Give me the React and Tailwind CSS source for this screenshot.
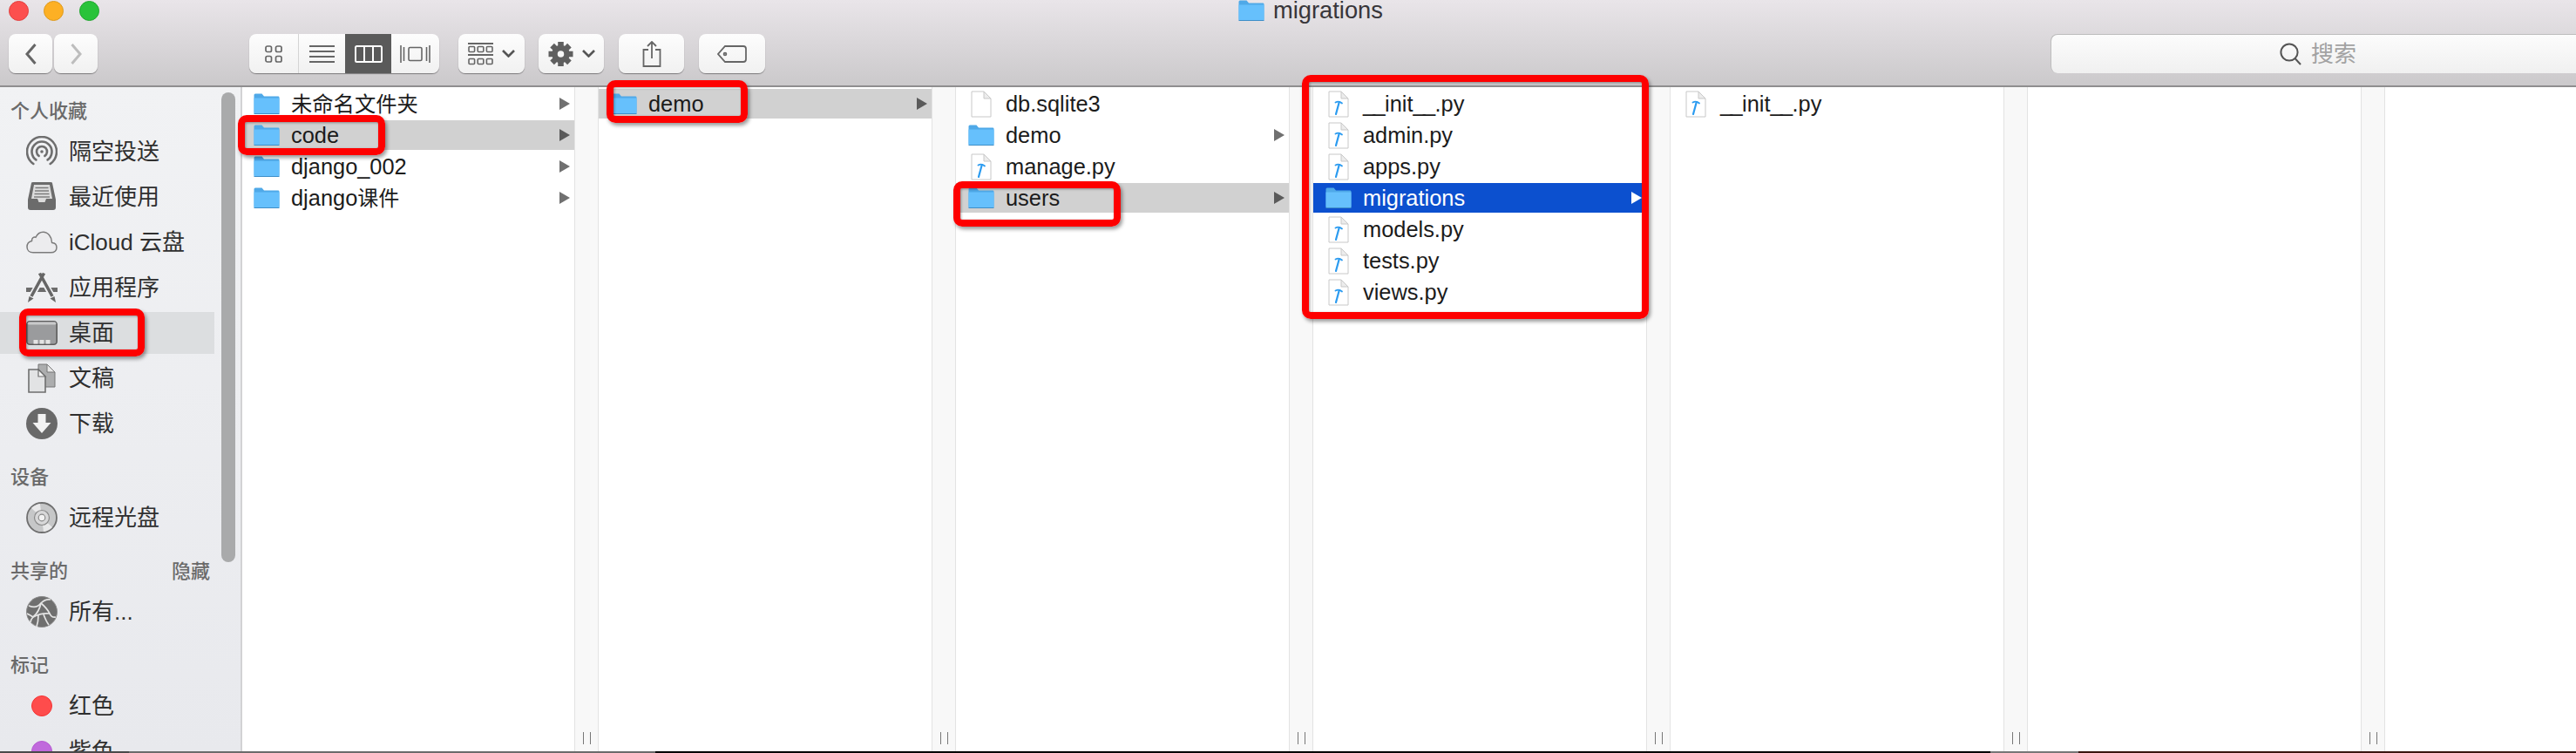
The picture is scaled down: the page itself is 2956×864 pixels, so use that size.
import React from "react";

const FONT = "font-['Liberation_Sans','Noto_Sans_CJK_SC',sans-serif]";

function Folder({ className = "w-[30px] h-[24px]" }) {
  return (
    <svg viewBox="0 0 30 24" className={className}>
      <path d="M0.5 2 Q0.5 0.5 2 0.5 H9.5 L12 3.5 H28.5 Q29.5 3.5 29.5 5 V22.5 Q29.5 23.5 28.5 23.5 H1.5 Q0.5 23.5 0.5 22.5 Z" fill="#4fa9e8" />
      <path d="M0.5 5.5 H29.5 V22 Q29.5 23 28.5 23 H1.5 Q0.5 23 0.5 22 Z" fill="#66c0fc" />
      <rect x="0.5" y="23" width="29" height="1" fill="#3f8fc8" />
    </svg>
  );
}

function PyFile({ plain }) {
  return (
    <svg viewBox="0 0 24 31" className="w-[24px] h-[31px]">
      <path d="M1 1 H15 L23 9 V30 H1 Z" fill="#fff" stroke="#c8c8c8" strokeWidth="1" />
      <path d="M15 1 V9 H23 Z" fill="#ececec" stroke="#c8c8c8" strokeWidth="1" />
      {!plain && (
        <g stroke="#2b9bf0" strokeLinecap="round" fill="none">
          <path d="M12.8 13 L9 27" strokeWidth="2.2" />
          <path d="M8.5 13.5 Q12.5 11.5 16 14.5" strokeWidth="1.8" />
        </g>
      )}
    </svg>
  );
}

function Row({ icon, children, arrow, selected, active, plain, first }) {
  let bg = "";
  if (selected) bg = "bg-[#d1d1d1]";
  if (active) bg = "bg-[#0c50cf]";
  return (
    <div className={`h-[34px] flex items-center ${first ? "pl-[13px]" : "pl-[14px]"} ${bg}`}>
      <div className="w-[30px] flex justify-center shrink-0">
        {icon === "folder" ? <Folder /> : <PyFile plain={plain} />}
      </div>
      <span className={`ml-[13px] text-[25.4px] leading-[34px] whitespace-nowrap ${active ? "text-white" : "text-[#1b1b1b]"}`}>{children}</span>
      {arrow && (
        <svg viewBox="0 0 12 14" className="ml-auto mr-[5px] w-[12px] h-[14px] shrink-0">
          <path d="M0 0 L12 7 L0 14 Z" fill={active ? "#fff" : selected ? "#5a5a5a" : "#707070"} />
        </svg>
      )}
    </div>
  );
}

// underscores run narrower in the reference font
function InitName() {
  return (
    <>
      <span className="tracking-[-2.6px]">__</span>
      <span className="ml-[2px]">init</span>
      <span className="tracking-[-2.6px]">__</span>
      <span className="ml-[2px]">.py</span>
    </>
  );
}

function Resizer() {
  return (
    <div className="w-[28px] shrink-0 bg-[#f8f8f8] border-x border-[#e3e3e3] flex justify-center items-end gap-[7px] pb-[8px]">
      <div className="w-[1px] h-[14px] bg-[#777]" />
      <div className="w-[1px] h-[14px] bg-[#777]" />
    </div>
  );
}

function Column({ width = "w-[382px]", children }) {
  return (
    <>
      <div className={`${width} shrink-0 bg-white pt-[2px] flex flex-col gap-[2px]`}>{children}</div>
      <Resizer />
    </>
  );
}

function SideHead({ children, right, top }) {
  return (
    <div className={`h-[40px] flex items-center justify-between pl-[12px] pr-[5px] pb-[2px] text-[22px] font-medium text-[#6a6a6a] ${top ? "" : "mt-[16px]"}`}>
      <span>{children}</span>
      {right && <span>{right}</span>}
    </div>
  );
}

function SideItem({ icon, children, selected }) {
  return (
    <div className="py-[2px]">
      <div className={`h-[48px] flex items-center pl-[30px] gap-[13px] text-[26px] text-[#2f2f2f] whitespace-nowrap ${selected ? "bg-[#dcdee0]" : ""}`}>
        <div className="w-[36px] h-[36px] flex items-center justify-center shrink-0">{icon}</div>
        <span>{children}</span>
      </div>
    </div>
  );
}

const AirdropIcon = (
  <svg viewBox="0 0 36 36" className="w-[36px] h-[36px]" fill="none" stroke="#6e6e6e" strokeWidth="2.6" strokeLinecap="round">
    <path d="M8.3 32 A17 17 0 1 1 27.7 32" />
    <path d="M11.4 27.4 A11.5 11.5 0 1 1 24.6 27.4" />
    <path d="M14.6 22.9 A6 6 0 1 1 21.4 22.9" />
    <circle cx="18" cy="18" r="1.8" fill="#6e6e6e" stroke="none" />
  </svg>
);

const RecentIcon = (
  <svg viewBox="0 0 36 36" className="w-[36px] h-[36px]">
    <path d="M6 2 Q6 1 8 1 H28 Q30 1 30 2 L34 21 V30 Q34 33 31 33 H5 Q2 33 2 30 V21 Z" fill="#6b6b6b" />
    <path d="M9 4 H27 L30 20 H23 L21.5 24 H14.5 L13 20 H6 Z" fill="#dcdcdc" />
    <g stroke="#777" strokeWidth="1.4">
      <path d="M10.5 7.5 H25.5" />
      <path d="M10 11 H26" />
      <path d="M9.5 14.5 H26.5" />
      <path d="M9 18 H27" />
    </g>
  </svg>
);

const CloudIcon = (
  <svg viewBox="0 0 36 26" className="w-[36px] h-[26px]">
    <path d="M8 24.8 H28.5 C32.5 24.8 35 22.3 35 19 C35 15.8 32.7 13.6 29.6 13.4 C29.4 6.6 25 1.2 19.5 1.2 C15.6 1.2 12.7 3.6 11 7.2 C8.8 6.4 6.2 8.2 6.5 11.4 C3 12.2 1 15 1 18.2 C1 22 3.8 24.8 8 24.8 Z" fill="#ececee" stroke="#7b7b7b" strokeWidth="1.5" />
  </svg>
);

const AppsIcon = (
  <svg viewBox="0 0 36 36" className="w-[36px] h-[36px]">
    <path d="M0 18 H36 V23 H0 Z" fill="#6c6c6c" />
    <path d="M21 1 L5 30" stroke="#f0f1f3" strokeWidth="7" />
    <path d="M15 1 L31 30" stroke="#f0f1f3" strokeWidth="7" />
    <path d="M20.5 1.5 L6 28" stroke="#666" strokeWidth="3.6" />
    <path d="M15.5 1.5 L30 28" stroke="#666" strokeWidth="3.6" />
    <path d="M3.5 28 L8.5 30.5 L2 35 Z" fill="#666" />
    <path d="M32.5 28 L27.5 30.5 L34 35 Z" fill="#666" />
  </svg>
);

const DesktopIcon = (
  <svg viewBox="0 0 36 28" className="w-[36px] h-[28px]">
    <rect x="0.8" y="0.8" width="34.4" height="26.4" rx="3.5" fill="#9a9b9d" stroke="#5d5d5d" strokeWidth="1.6" />
    <rect x="1.6" y="1.6" width="32.8" height="3" rx="1.5" fill="#c9cacb" />
    <rect x="8.5" y="22" width="5" height="4.5" fill="#e4e4e4" />
    <rect x="15.5" y="22" width="5" height="4.5" fill="#e4e4e4" />
    <rect x="22.5" y="22" width="5" height="4.5" fill="#e4e4e4" />
  </svg>
);

const DocsIcon = (
  <svg viewBox="0 0 32 34" className="w-[32px] h-[34px]">
    <path d="M12 1 H22 L31 10 V27 H12 Z" fill="#acadae" stroke="#777" strokeWidth="1" />
    <path d="M22 1 V10 H31 Z" fill="#e6e6e6" stroke="#777" strokeWidth="1" />
    <path d="M1 7 H12 L20 15 V33 H1 Z" fill="#e2e3e4" stroke="#6e6e6e" strokeWidth="1.6" />
    <path d="M12 7 V15 H20 Z" fill="#f5f5f5" stroke="#6e6e6e" strokeWidth="1.2" />
  </svg>
);

const DownloadIcon = (
  <svg viewBox="0 0 36 36" className="w-[36px] h-[36px]">
    <circle cx="18" cy="18" r="18" fill="#696969" />
    <path d="M13.5 7 H22.5 V17 H28.5 L18 29 L7.5 17 H13.5 Z" fill="#f2f2f2" />
  </svg>
);

const DiscIcon = (
  <svg viewBox="0 0 36 36" className="w-[36px] h-[36px]">
    <circle cx="18" cy="18" r="17" fill="#c6c7c8" stroke="#6f6f6f" strokeWidth="1.8" />
    <path d="M18 18 L6 7 A17 17 0 0 1 16 2 Z" fill="#e9e9ea" />
    <path d="M18 18 L30 29 A17 17 0 0 1 20 34 Z" fill="#e9e9ea" />
    <circle cx="18" cy="18" r="8.5" fill="#d8d8d9" stroke="#8a8a8a" strokeWidth="1.2" />
    <circle cx="18" cy="18" r="3.8" fill="#f2f2f2" stroke="#8a8a8a" strokeWidth="1.2" />
  </svg>
);

const NetworkIcon = (
  <svg viewBox="0 0 36 36" className="w-[36px] h-[36px]">
    <circle cx="18" cy="18" r="17.5" fill="#6f6f6f" stroke="#8a8a8a" strokeWidth="1" />
    <g fill="none" stroke="#e4e4e4" strokeWidth="1.7">
      <path d="M3 11 Q12 15 17 8 Q22 3 28 4" />
      <path d="M17 8 Q15 18 8 24 Q5 27 5 30" />
      <path d="M17 8 Q24 14 27 20 Q29 25 34 24" />
      <path d="M8 24 Q17 19 27 20" />
      <path d="M14 22 Q14 29 12 35" />
      <path d="M20 21 Q23 29 26 33" />
      <path d="M1 20 Q5 22 8 24" />
    </g>
  </svg>
);

function TagDot({ color }) {
  return (
    <div className="w-[36px] flex justify-center">
      <div className={`w-[24px] h-[24px] rounded-full border ${color}`} />
    </div>
  );
}

function Btn({ className = "", children }) {
  return (
    <div className={`h-[45px] flex items-center justify-center rounded-[8px] bg-linear-to-b from-[#fdfdfd] to-[#f1f1f1] shadow-[0_1px_1px_rgba(0,0,0,0.4)] ${className}`}>
      {children}
    </div>
  );
}

function Chevron() {
  return (
    <svg viewBox="0 0 15 9" className="w-[15px] h-[9px]" fill="none" stroke="#555" strokeWidth="2.6">
      <path d="M1 1 L7.5 7.5 L14 1" />
    </svg>
  );
}

function ThreeBoxes({ y }) {
  return (
    <g fill="none" stroke="#666" strokeWidth="1.6">
      <rect x="1" y={y} width="6.6" height="6" rx="1" />
      <rect x="11.2" y={y} width="6.6" height="6" rx="1" />
      <rect x="21.4" y={y} width="6.6" height="6" rx="1" />
    </g>
  );
}

function Gear() {
  const teeth = [0, 45, 90, 135, 180, 225, 270, 315];
  return (
    <svg viewBox="0 0 30 30" className="w-[29px] h-[28px]">
      {teeth.map((a) => (
        <rect key={a} x="11.5" y="0" width="7" height="7" fill="#5f5f5f" transform={`rotate(${a} 15 15)`} />
      ))}
      <circle cx="15" cy="15" r="11" fill="#5f5f5f" />
      <circle cx="15" cy="15" r="4" fill="#f6f6f6" />
    </svg>
  );
}

function Toolbar() {
  return (
    <div className="h-[100px] shrink-0 bg-linear-to-b from-[#e9e5e9] to-[#cbc9cb] border-b-2 border-[#8f8e8f] overflow-hidden">
      <div className="h-[39px] flex">
        <div className="w-[23px] h-[23px] ml-[10px] mt-[1px] rounded-full bg-[#fc4f4e] border border-[#e2403f]" />
        <div className="w-[23px] h-[23px] ml-[17px] mt-[1px] rounded-full bg-[#fdb024] border border-[#dd9a1f]" />
        <div className="w-[23px] h-[23px] ml-[18px] mt-[1px] rounded-full bg-[#29c33a] border border-[#22a630]" />
        <div className="ml-[1307px] flex items-center h-[24px] gap-[10px]">
          <Folder />
          <span className="text-[27.3px] leading-[24px] text-[#38363a]">migrations</span>
        </div>
      </div>

      <div className="flex pl-[10px]">
        <Btn className="w-[50px]">
          <svg viewBox="0 0 13 24" className="w-[13px] h-[24px]" fill="none" stroke="#666" strokeWidth="3">
            <path d="M11.5 1 L2 12 L11.5 23" />
          </svg>
        </Btn>
        <Btn className="w-[50px] ml-[2px]">
          <svg viewBox="0 0 13 24" className="w-[13px] h-[24px]" fill="none" stroke="#bdbdbd" strokeWidth="3">
            <path d="M1.5 1 L11 12 L1.5 23" />
          </svg>
        </Btn>

        <div className="ml-[174px] w-[218px] h-[45px] flex rounded-[8px] overflow-hidden bg-linear-to-b from-[#fdfdfd] to-[#f1f1f1] shadow-[0_1px_1px_rgba(0,0,0,0.4)]">
          <div className="w-[57px] flex items-center justify-center border-r border-[#d4d4d4]">
            <svg viewBox="0 0 20 20" className="w-[20px] h-[20px]" fill="none" stroke="#666" strokeWidth="1.7">
              <rect x="1" y="1" width="6.5" height="6.5" rx="1.8" />
              <rect x="12.5" y="1" width="6.5" height="6.5" rx="1.8" />
              <rect x="1" y="12.5" width="6.5" height="6.5" rx="1.8" />
              <rect x="12.5" y="12.5" width="6.5" height="6.5" rx="1.8" />
            </svg>
          </div>
          <div className="w-[53px] flex items-center justify-center">
            <svg viewBox="0 0 29 20" className="w-[29px] h-[20px]" stroke="#666" strokeWidth="2">
              <path d="M0 1 H29 M0 7 H29 M0 13 H29 M0 19 H29" />
            </svg>
          </div>
          <div className="w-[53px] flex items-center justify-center bg-[#5a5a5a]">
            <svg viewBox="0 0 32 20" className="w-[32px] h-[20px]" fill="none" stroke="#fff" strokeWidth="2">
              <rect x="1" y="1" width="30" height="18" rx="1.5" />
              <path d="M11 1 V19 M21 1 V19" />
            </svg>
          </div>
          <div className="w-[55px] flex items-center justify-center">
            <svg viewBox="0 0 35 22" className="w-[35px] h-[22px]" fill="none" stroke="#666" strokeWidth="1.6">
              <rect x="10" y="3.5" width="15" height="15" rx="1.5" />
              <path d="M1 1 V21 M4.5 3 V19 M34 1 V21 M30.5 3 V19" />
            </svg>
          </div>
        </div>

        <Btn className="w-[76px] ml-[22px] gap-[10px]">
          <svg viewBox="0 0 29 26" className="w-[29px] h-[26px]">
            <path d="M0 1 H29 M0 14 H29" stroke="#666" strokeWidth="1.8" />
            <ThreeBoxes y={4.5} />
            <ThreeBoxes y={18.5} />
          </svg>
          <Chevron />
        </Btn>
        <Btn className="w-[75px] ml-[16px] gap-[10px]">
          <Gear />
          <Chevron />
        </Btn>
        <Btn className="w-[75px] ml-[17px]">
          <svg viewBox="0 0 22 30" className="w-[22px] h-[30px]" fill="none" stroke="#666" strokeWidth="1.8">
            <path d="M7 10 H1.5 V29 H20.5 V10 H15" />
            <path d="M11 20 V1.5 M6 6 L11 1 L16 6" />
          </svg>
        </Btn>
        <Btn className="w-[76px] ml-[17px]">
          <svg viewBox="0 0 34 20" className="w-[34px] h-[20px]" fill="none" stroke="#666" strokeWidth="1.8">
            <path d="M9 1 H30 Q33 1 33 4 V16 Q33 19 30 19 H9 L1 10 Z" />
            <circle cx="9" cy="10" r="1.4" />
          </svg>
        </Btn>

        <div className="ml-[1475px] flex-1 h-[45px] flex items-center pl-[262px] gap-[11px] rounded-l-[8px] bg-linear-to-b from-[#fcfcfc] to-[#f0f0f0] border-t border-l border-[#bdbdbd] border-b-[#9a9a9a]">
          <svg viewBox="0 0 25 26" className="w-[25px] h-[26px]" fill="none" stroke="#555" strokeWidth="2">
            <circle cx="11" cy="11" r="9.6" />
            <path d="M17.5 18 L24 25" />
          </svg>
          <span className="text-[26px] text-[#a2a2a2]">搜索</span>
        </div>
      </div>
    </div>
  );
}

function Sidebar() {
  return (
    <div className="w-[278px] shrink-0 flex bg-linear-to-b from-[#f1f2f4] to-[#e8e9ed] border-r-2 border-[#d2d2d4] overflow-hidden">
      <div className="w-[246px] shrink-0 pt-[8px]">
        <SideHead top>个人收藏</SideHead>
        <SideItem icon={AirdropIcon}>隔空投送</SideItem>
        <SideItem icon={RecentIcon}>最近使用</SideItem>
        <SideItem icon={CloudIcon}>iCloud 云盘</SideItem>
        <SideItem icon={AppsIcon}>应用程序</SideItem>
        <SideItem icon={DesktopIcon} selected>桌面</SideItem>
        <SideItem icon={DocsIcon}>文稿</SideItem>
        <SideItem icon={DownloadIcon}>下载</SideItem>
        <SideHead>设备</SideHead>
        <SideItem icon={DiscIcon}>远程光盘</SideItem>
        <SideHead right="隐藏">共享的</SideHead>
        <SideItem icon={NetworkIcon}>所有...</SideItem>
        <SideHead>标记</SideHead>
        <SideItem icon={<TagDot color="bg-[#fe4c4c] border-[#f53333]" />}>红色</SideItem>
        <SideItem icon={<TagDot color="bg-[#c069dc] border-[#b55ad2]" />}>紫色</SideItem>
      </div>
      <div className="ml-[8px] mt-[6px] w-[16px] h-[539px] rounded-full bg-[#a9aaab]" />
    </div>
  );
}

const boxCls = "absolute border-[8px] border-[#fe0000] rounded-[10px] shadow-[2px_3px_4px_rgba(0,0,0,0.4),inset_1px_1px_3px_rgba(0,0,0,0.35)] pointer-events-none";

export default function App() {
  return (
    <div className={`relative w-[2956px] h-[864px] overflow-hidden flex flex-col bg-white ${FONT}`}>
      <Toolbar />

      <div className="h-[762px] flex overflow-hidden">
        <Sidebar />
        <Column width="w-[381px]">
          <Row icon="folder" arrow first>
            <span className="text-[24.3px]">未命名文件夹</span>
          </Row>
          <Row icon="folder" arrow selected first>code</Row>
          <Row icon="folder" arrow first>django_002</Row>
          <Row icon="folder" arrow first>
            django<span className="text-[24px]">课件</span>
          </Row>
        </Column>
        <Column>
          <Row icon="folder" arrow selected>demo</Row>
        </Column>
        <Column>
          <Row icon="file" plain>db.sqlite3</Row>
          <Row icon="folder" arrow>demo</Row>
          <Row icon="file">manage.py</Row>
          <Row icon="folder" arrow selected>users</Row>
        </Column>
        <Column>
          <Row icon="file"><InitName /></Row>
          <Row icon="file">admin.py</Row>
          <Row icon="file">apps.py</Row>
          <Row icon="folder" arrow active>migrations</Row>
          <Row icon="file">models.py</Row>
          <Row icon="file">tests.py</Row>
          <Row icon="file">views.py</Row>
        </Column>
        <Column>
          <Row icon="file"><InitName /></Row>
        </Column>
        <Column />
        <div className="flex-1 bg-white" />
      </div>

      <div className="h-[2px] flex shrink-0">
        <div className="w-[148px] bg-[#4a4a4a]" />
        <div className="w-[604px] bg-[#6b6b6b]" />
        <div className="w-[1532px] bg-black" />
        <div className="w-[101px] bg-[#777]" />
        <div className="flex-1 bg-[#3a1510]" />
      </div>

      {/* red annotation boxes drawn over the finder window */}
      <div className={`${boxCls} left-[22px] top-[354px] w-[144px] h-[55px]`} />
      <div className={`${boxCls} left-[273px] top-[132px] w-[169px] h-[46px]`} />
      <div className={`${boxCls} left-[696px] top-[92px] w-[162px] h-[49px]`} />
      <div className={`${boxCls} left-[1094px] top-[208px] w-[192px] h-[52px]`} />
      <div className={`${boxCls} left-[1494px] top-[86px] w-[398px] h-[280px]`} />
    </div>
  );
}
